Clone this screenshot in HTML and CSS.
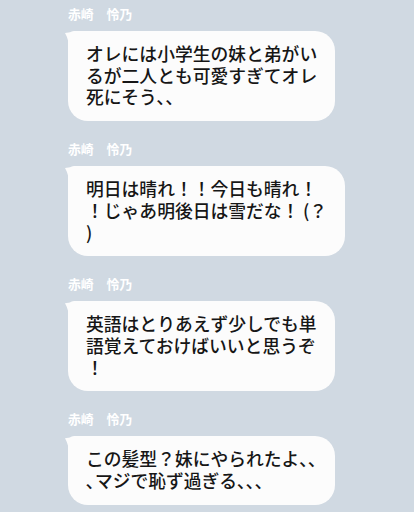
FILE: index.html
```html
<!DOCTYPE html>
<html lang="ja">
<head>
<meta charset="utf-8">
<link rel="stylesheet" href="styles.css">
</head>
<body>
<div class="chat">
  <div class="msg">
    <div class="name">赤崎　怜乃</div>
    <div class="bubble">オレには小学生の妹と弟がい<br>るが二人とも可愛すぎてオレ<br>死にそう､､</div>
  </div>
  <div class="msg">
    <div class="name">赤崎　怜乃</div>
    <div class="bubble">明日は晴れ！！今日も晴れ！<br>！じゃあ明後日は雪だな！&#8201;(？<br>)</div>
  </div>
  <div class="msg">
    <div class="name">赤崎　怜乃</div>
    <div class="bubble">英語はとりあえず少しでも単<br>語覚えておけばいいと思うぞ<br>！</div>
  </div>
  <div class="msg">
    <div class="name">赤崎　怜乃</div>
    <div class="bubble">この髪型？妹にやられたよ､､<br>､マジで恥ず過ぎる､､､</div>
  </div>
</div>
</body>
</html>
```

FILE: styles.css
```css
html, body {
  margin: 0;
  padding: 0;
  background: #d0d9e2;
}
body {
  width: 414px;
  height: 512px;
  overflow: hidden;
  font-family: "Noto Sans CJK JP", "Noto Sans", sans-serif;
}
.chat {
  display: flex;
  flex-direction: column;
  gap: 19px;
  padding: 5px 0 0 68px;
}
.msg {
  display: flex;
  flex-direction: column;
  align-items: flex-start;
}
.name {
  color: #ffffff;
  font-weight: 700;
  font-size: 12.8px;
  line-height: 18px;
  height: 18px;
  margin-bottom: 8px;
}
.bubble {
  position: relative;
  background: #fcfcfc;
  color: #161616;
  font-size: 17.8px;
  font-weight: 500;
  line-height: 21.7px;
  padding: 12px 18px 13px 18px;
  border-radius: 6px 20px 20px 20px;
  white-space: nowrap;
}
.bubble::before {
  content: "";
  position: absolute;
  left: -3px;
  top: 0;
  width: 22px;
  height: 18px;
  background: #fcfcfc;
  clip-path: path('M0 2 Q10 0 22 0 L22 18 L4 18 Q4 9 0 2 Z');
}
```
